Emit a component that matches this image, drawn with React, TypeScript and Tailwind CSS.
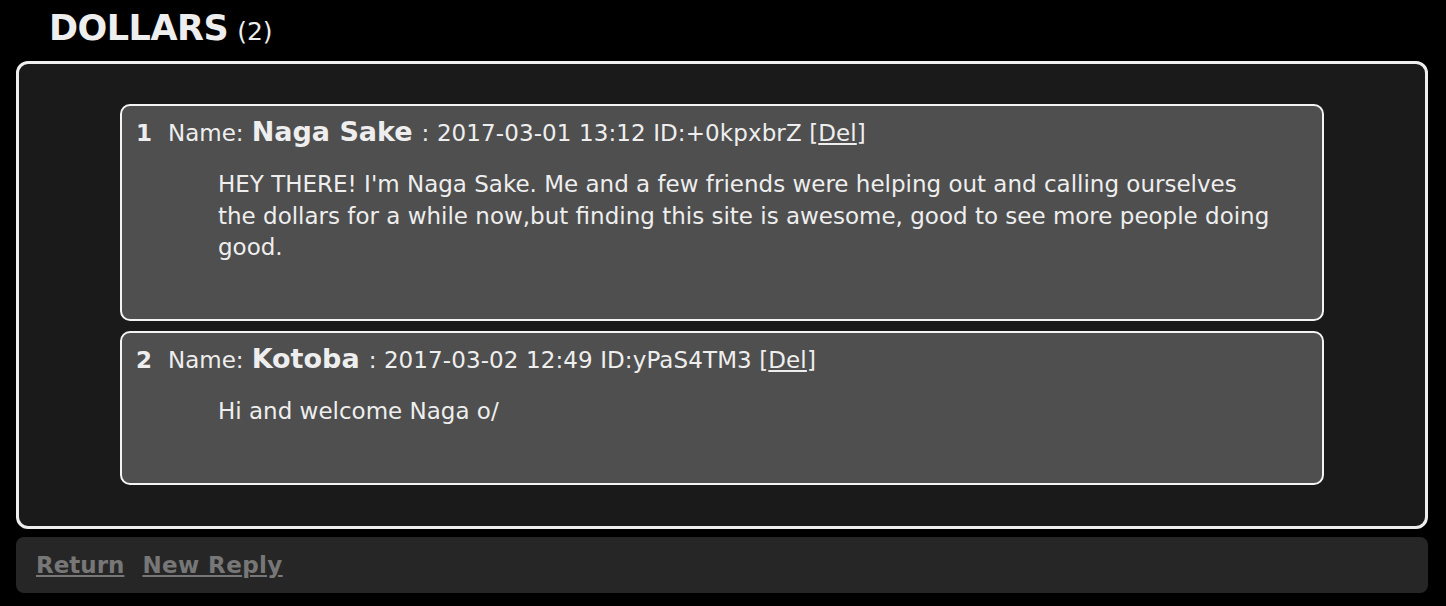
import React from "react";

const posts = [
  {
    n: 1,
    name: "Naga Sake",
    date: "2017-03-01 13:12",
    id: "+0kpxbrZ",
    body: "HEY THERE! I'm Naga Sake. Me and a few friends were helping out and calling ourselves the dollars for a while now,but finding this site is awesome, good to see more people doing good.",
  },
  {
    n: 2,
    name: "Kotoba",
    date: "2017-03-02 12:49",
    id: "yPaS4TM3",
    body: "Hi and welcome Naga o/",
  },
];

export default function App() {
  return (
    <div
      className="w-[1446px] h-[606px] bg-black text-[#eeeeee] overflow-hidden"
      style={{ fontFamily: "'DejaVu Sans', Verdana, sans-serif" }}
    >
      <div className="pl-[49px] pt-[6px] h-[61px] flex items-baseline">
        <span className="text-[35px] font-bold leading-[44px] tracking-[-0.5px]">DOLLARS</span>
        <span className="text-[25px] ml-[9px]">(2)</span>
      </div>
      <div className="mx-[16px] w-[1412px] h-[468px] border-[3px] border-[#eeeeee] rounded-[12px] bg-[#1a1a1a] pt-[40px] pl-[101px] flex flex-col gap-[10px]">
        {posts.map((p) => (
          <div
            key={p.n}
            className={`w-[1204px] ${p.n === 1 ? "h-[217px]" : "h-[154px]"} border-2 border-[#f4f4f4] rounded-[10px] bg-[#4f4f4f] pl-[14px] pt-[10px]`}
          >
            <div className="flex items-baseline text-[23px] leading-[32px] whitespace-nowrap">
              <span className="font-bold">{p.n}</span>
              <span className="ml-[16px]">Name:</span>
              <span className="ml-[8px] font-bold text-[27px]">{p.name}</span>
              <span className="ml-[9px] tracking-[0.1px]">
                : {p.date} ID:{p.id} [<span className="underline">Del</span>]
              </span>
            </div>
            <div className="ml-[82px] mt-[20px] w-[1060px] text-[23px] leading-[31.5px]">
              {p.body}
            </div>
          </div>
        ))}
      </div>
      <div className="mx-[16px] mt-[8px] w-[1412px] h-[56px] rounded-[8px] bg-[#262626] pl-[20px] flex items-center gap-[18px]">
        <a className="text-[23px] font-bold text-[#777777] underline">Return</a>
        <a className="text-[23px] font-bold text-[#777777] underline tracking-[0.4px]">New Reply</a>
      </div>
    </div>
  );
}
